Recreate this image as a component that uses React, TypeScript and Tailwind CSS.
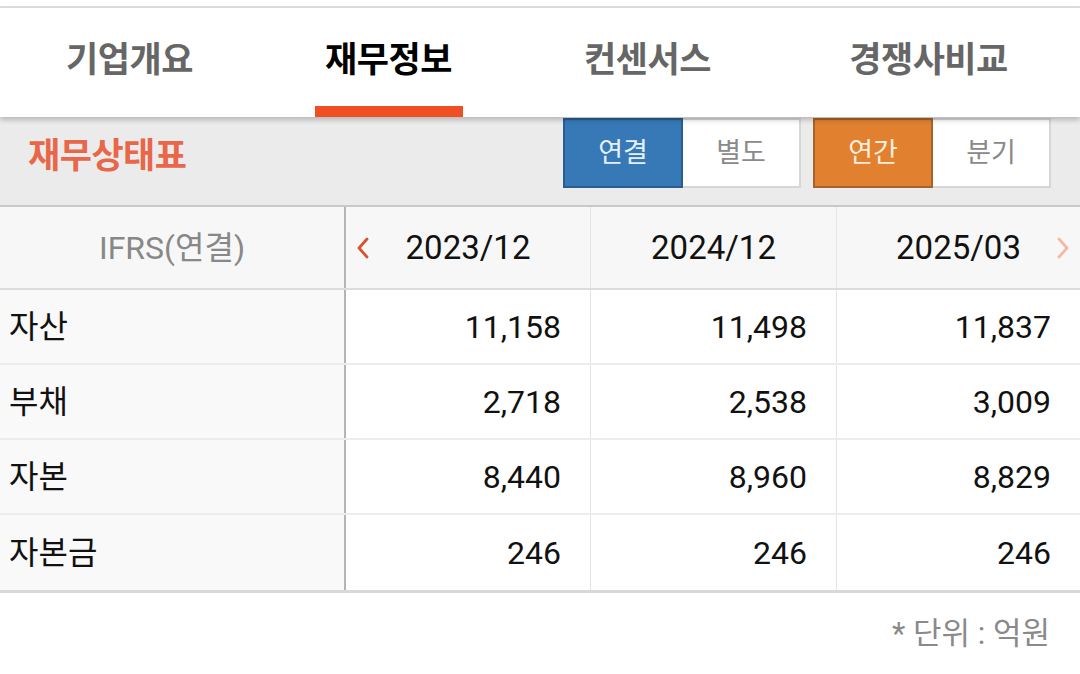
import React from 'react';

const tabs = ['기업개요', '재무정보', '컨센서스', '경쟁사비교'];
const periods = ['2023/12', '2024/12', '2025/03'];
const rows: { label: string; values: string[] }[] = [
  { label: '자산', values: ['11,158', '11,498', '11,837'] },
  { label: '부채', values: ['2,718', '2,538', '3,009'] },
  { label: '자본', values: ['8,440', '8,960', '8,829'] },
  { label: '자본금', values: ['246', '246', '246'] },
];

function Chevron({ dir, className }: { dir: 'left' | 'right'; className: string }) {
  return (
    <svg width="16" height="26" viewBox="0 0 16 26" className={className}>
      <path
        d={dir === 'left' ? 'M12 4 L4 13 L12 22' : 'M4 4 L12 13 L4 22'}
        fill="none"
        stroke="currentColor"
        strokeWidth="2.8"
        strokeLinecap="round"
        strokeLinejoin="round"
      />
    </svg>
  );
}

export default function App() {
  return (
    <div
      className="w-[1080px] h-[674px] bg-white overflow-hidden flex flex-col"
      style={{ fontFamily: 'Roboto, "Noto Sans CJK KR", sans-serif' }}
    >
      {/* top hairline */}
      <div className="h-[6px] bg-white" />
      <div className="h-[2px] bg-[#dedede]" />

      {/* tab bar */}
      <div className="relative z-10 h-[109px] bg-white flex shadow-[0_3px_5px_rgba(0,0,0,0.22)]">
        {tabs.map((t, i) => (
          <div
            key={t}
            className={`relative flex items-center justify-center ${i === 3 ? 'w-[303px]' : 'w-[259px]'}`}
          >
            <span
              className={`text-[35px] font-bold tracking-[-0.5px] -mt-[2px] ${i === 1 ? 'text-black' : 'text-[#666666]'}`}
            >
              {t}
            </span>
            {i === 1 && <div className="absolute bottom-0 left-[56px] w-[148px] h-[11px] bg-[#f04e23]" />}
          </div>
        ))}
      </div>

      {/* section header */}
      <div className="h-[88px] bg-[#ebebeb] flex items-start justify-between">
        <div className="pl-[28px] pt-[14px] text-[35px] font-bold text-[#e8664a] tracking-[-0.5px]">재무상태표</div>
        <div className="flex gap-[12px] pr-[29px] pt-[1px]">
          <div className="flex h-[70px]">
            <div className="w-[120px] flex items-center justify-center bg-[#3679b6] border-2 border-[#2b5e8e] text-[27px] text-[#e6f0fa]">
              연결
            </div>
            <div className="w-[118px] flex items-center justify-center bg-white border-2 border-l-0 border-[#d6d6d6] text-[27px] text-[#8a8a8a]">
              별도
            </div>
          </div>
          <div className="flex h-[70px]">
            <div className="w-[120px] flex items-center justify-center bg-[#e1802f] border-2 border-[#a8632a] text-[27px] text-[#fbeedd]">
              연간
            </div>
            <div className="w-[118px] flex items-center justify-center bg-white border-2 border-l-0 border-[#d6d6d6] text-[27px] text-[#8a8a8a]">
              분기
            </div>
          </div>
        </div>
      </div>

      {/* table */}
      <div className="border-t-2 border-[#c8c8c8] border-b-[3px] border-b-[#d8d8d8]">
        <div className="grid grid-cols-[346px_245px_246px_243px] h-[83px] bg-[#f7f7f7] border-b-2 border-[#dcdcdc]">
          <div className="flex items-center justify-center border-r-2 border-[#b4b4b4] text-[32px] text-[#888888]">
            IFRS(연결)
          </div>
          {periods.map((p, i) => (
            <div
              key={p}
              className={`relative flex items-center justify-center text-[33px] text-[#111111] ${i < 2 ? 'border-r border-[#e4e4e4]' : ''}`}
            >
              {i === 0 && <Chevron dir="left" className="absolute left-[9px] top-[28px] text-[#d6552e]" />}
              {p}
              {i === 2 && <Chevron dir="right" className="absolute right-[9px] top-[28px] text-[#f2b9a9]" />}
            </div>
          ))}
        </div>
        {rows.map((r, ri) => (
          <div
            key={r.label}
            className={`grid grid-cols-[346px_245px_246px_243px] h-[75px] ${ri < rows.length - 1 ? 'border-b-2 border-[#ececec]' : ''}`}
          >
            <div className="flex items-center pl-[9px] bg-[#f9f9f9] border-r-2 border-[#b4b4b4] text-[32px] text-[#111111]">
              {r.label}
            </div>
            {r.values.map((v, i) => (
              <div
                key={i}
                className={`flex items-center justify-end bg-white pr-[29px] text-[32px] text-[#111111] ${i < 2 ? 'border-r border-[#e4e4e4]' : ''}`}
              >
                {v}
              </div>
            ))}
          </div>
        ))}
      </div>

      {/* footer */}
      <div className="flex justify-end pr-[30px] pt-[18px] text-[31px] text-[#8a8a8a]">* 단위 : 억원</div>
    </div>
  );
}
